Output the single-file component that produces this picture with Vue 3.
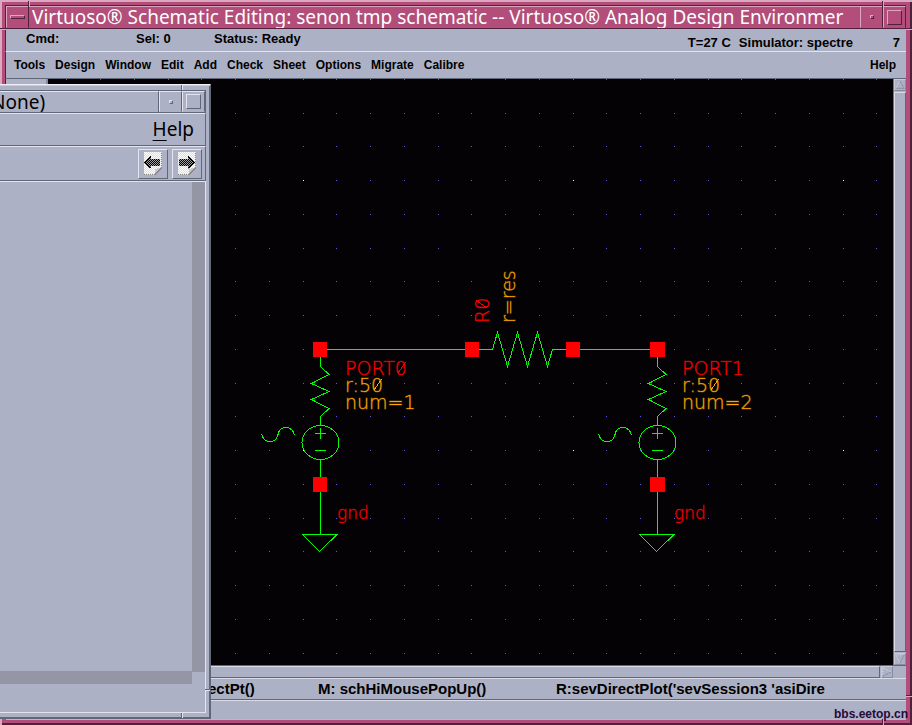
<script setup>
const menus = ['Tools', 'Design', 'Window', 'Edit', 'Add', 'Check', 'Sheet', 'Options', 'Migrate', 'Calibre']

const dots = []
for (let row = 0; row < 18; row++) {
  for (let col = 0; col < 26; col++) {
    dots.push({
      id: row * 26 + col,
      x: Math.floor(66.75 + col * 33.75),
      y: Math.floor(79.49 + row * 33.75),
      major: row % 8 === 3 && col % 8 === 7
    })
  }
}

const ports = [
  { name: 'PORT0', num: 'num=1', x: 320, slash: true },
  { name: 'PORT1', num: 'num=2', x: 657, slash: false }
]
const pins = [
  { x: 313, y: 342, w: 14 },
  { x: 465, y: 342, w: 14 },
  { x: 566, y: 342, w: 14 },
  { x: 650, y: 342, w: 15 },
  { x: 313, y: 477, w: 14 },
  { x: 650, y: 477, w: 15 }
]
</script>

<template>
  <main class="window">
    <header class="titlebar">
      <button class="tb-btn" aria-label="Window menu"><span class="bar"></span></button>
      <h1 class="title">Virtuoso® Schematic Editing: senon tmp schematic -- Virtuoso® Analog Design Environmer</h1>
      <button class="tb-btn" aria-label="Minimize"><span class="dot"></span></button>
      <button class="tb-btn" aria-label="Maximize"><span class="box"></span></button>
    </header>

    <section class="status">
      <span class="cmd">Cmd:</span>
      <span class="sel">Sel: 0</span>
      <span class="state">Status: Ready</span>
      <span class="temp">T=27 C</span>
      <span class="sim">Simulator: spectre</span>
      <span class="count">7</span>
    </section>

    <nav class="menubar">
      <button v-for="m in menus" :key="m">{{ m }}</button>
      <button class="help">Help</button>
    </nav>

    <section class="work">
      <aside class="palette"></aside>
      <svg class="canvas" role="img" aria-label="Schematic">
        <g transform="translate(-48 -79)" shape-rendering="crispEdges">
          <rect v-for="d in dots" :key="d.id" :x="d.x" :y="d.y" width="1" height="1" :fill="d.major ? '#ffffff' : '#5a5ae0'" />
          <path class="wire" d="M327 349.5H465M580 349.5H650" />
          <path class="part" d="M479 349.5H492.5L497.5 332.5L507.5 366.5L517.5 332.5L527.5 366.5L537.5 332.5L547.5 366.5L552.5 349.5H566" />
          <text class="label red" transform="translate(489 323) rotate(-90)">R0</text>
          <path class="red-line" d="M476.5 300.5L487.5 308.5" />
          <text class="label orange" transform="translate(515 323) rotate(-90)">r=res</text>
          <g v-for="p in ports" :key="p.name" :transform="`translate(${p.x} 0)`">
            <path class="part" d="M.5 356V366.5L9 374.5L-8.5 383.5L9 391.5L-8.5 399.5L9 408.5L.5 416.5V425.5M.5 460V477M.5 491V534.5M-17.5 534.5H17L-.5 551.5Z" />
            <ellipse class="part" cx="0.5" cy="442.5" rx="18.5" ry="17" />
            <path class="part" d="M-5 433.5H6M.5 428V439M-5 450.5H6" />
            <path class="part" d="M-58.5 434Q-56.5 441.5-50 441.5Q-43.5 441.5-42 434.5Q-40.5 427.5-34.5 427.5Q-27.5 427.5-25.5 435" />
            <text class="label red" x="25" y="375">{{ p.name }}</text>
            <path v-if="p.slash" class="red-line" d="M77.5 373.5L85.5 362.5" />
            <text class="label orange" x="25" y="392">r:50</text>
            <path class="orange-line" d="M53.5 390.5L61.5 379.5" />
            <text class="label orange" x="25" y="409">{{ p.num }}</text>
            <text class="label small red" x="17" y="519">gnd</text>
          </g>
          <rect v-for="(p, i) in pins" :key="'pin' + i" :x="p.x" :y="p.y" :width="p.w" height="15" fill="#ff0000" />
        </g>
      </svg>
      <div class="vscroll">
        <svg class="arrow" viewBox="0 0 12 12"><path class="hi" d="M1 10L5.5 1" /><path class="lo" d="M6 1L11 10H1" /></svg>
        <div class="vthumb"></div>
        <svg class="arrow" viewBox="0 0 12 12"><path class="hi" d="M11 1H1L6 11" /><path class="lo" d="M6 11L11 1" /></svg>
      </div>
    </section>

    <div class="hscroll">
      <div class="hthumb"></div>
      <svg class="arrow" viewBox="0 0 12 12"><path class="hi" d="M1 1V11M1 1L11 6" /><path class="lo" d="M11 6L1 11" /></svg>
    </div>
    <footer class="mouse">
      <span class="m-left">ectPt()</span>
      <span class="m-mid">M: schHiMousePopUp()</span>
      <span class="m-right">R:sevDirectPlot('sevSession3 'asiDire</span>
    </footer>
    <div class="prompt"></div>

    <i class="notch n1"></i><i class="notch n2"></i><i class="notch n3"></i>
    <i class="notch side s1"></i><i class="notch side s2"></i><i class="notch side s3"></i>

    <section class="dialog">
      <header class="d-title">
        <h2>None)</h2>
        <button aria-label="Minimize dialog"><span class="dot"></span></button>
        <button aria-label="Maximize dialog"><span class="box"></span></button>
      </header>
      <nav class="d-menu"><button><u>H</u>elp</button></nav>
      <div class="d-tools">
        <button aria-label="Back">
          <svg width="20" height="24" viewBox="0 0 20 24" shape-rendering="crispEdges">
            <defs>
              <pattern id="stipple" width="2" height="2" patternUnits="userSpaceOnUse"><rect width="1" height="1" fill="#000" /><rect x="1" y="1" width="1" height="1" fill="#000" /></pattern>
              <pattern id="paper" width="2" height="2" patternUnits="userSpaceOnUse"><rect width="2" height="2" fill="#fff" /><rect width="1" height="1" fill="#dcdce0" /><rect x="1" y="1" width="1" height="1" fill="#dcdce0" /></pattern>
            </defs>
            <path d="M1 0H19V16L12 23H1Z" fill="url(#paper)" />
            <path d="M18.5 1V16M1 22.5H12" fill="none" stroke="#888" stroke-dasharray="1 1" />
            <path d="M12 23V17L18 15Z" fill="#c8c8c8" /><path d="M12 22.5L18.5 16" stroke="#888" />
            <path d="M1 10L8 4V7H17V14H8V17Z" fill="#a0a0a0" />
            <path d="M1 10L8 4V7H17V14H8V17Z" fill="url(#stipple)" />
            <path d="M7.5 4.5L1.5 10.5L7.5 16.5" fill="none" stroke="#000" />
          </svg>
        </button>
        <button aria-label="Forward">
          <svg width="20" height="24" viewBox="0 0 20 24" shape-rendering="crispEdges">
            <path d="M1 0H19V16L12 23H1Z" fill="url(#paper)" />
            <path d="M18.5 1V16M1 22.5H12" fill="none" stroke="#888" stroke-dasharray="1 1" />
            <path d="M12 23V17L18 15Z" fill="#c8c8c8" /><path d="M12 22.5L18.5 16" stroke="#888" />
            <path d="M18 10L11 4V7H2V14H11V17Z" fill="#a0a0a0" />
            <path d="M18 10L11 4V7H2V14H11V17Z" fill="url(#stipple)" />
            <path d="M11.5 4.5L17.5 10.5L11.5 16.5" fill="none" stroke="#000" />
          </svg>
        </button>
      </div>
      <div class="d-body"></div>
      <i class="d-notch t"></i><i class="d-notch b"></i><i class="d-notch r"></i>
    </section>

    <span class="watermark">bbs.eetop.cn</span>
  </main>
</template>

<style>
body { overflow: hidden; background: #adb1c5; }
</style>

<style scoped>
* { box-sizing: border-box; }
button {
  appearance: none; border: 0; padding: 0; margin: 0; background: none;
  font: inherit; color: inherit; border-radius: 0;
}
.window {
  position: relative; display: flex; flex-direction: column; height: 100vh;
  padding: 5px 6px 5px 5px;
  background: #b34d79; color: #000;
  box-shadow: inset 2px 2px #dca8c0, inset -2px -2px #50203c;
  font: bold 12px/16px "Liberation Sans", Arial, sans-serif;
}
.titlebar {
  display: flex; flex: none; height: 24px;
  border: 1px solid #50203c; border-width: 1px 0 1px 1px;
  box-shadow: inset 0 1px #dca8c0;
}
.tb-btn {
  flex: none; width: 23px; display: flex; align-items: center; justify-content: center;
  border: 1px solid; border-color: #dca8c0 #50203c #b34d79 #dca8c0;
}
.title {
  flex: 1; min-width: 0; margin: 0; padding: 0 0 0 3px; overflow: hidden; white-space: nowrap;
  color: #fff; font: 19px/22px "Noto Sans", sans-serif;
}
.bar { width: 15px; height: 4px; border: 1px solid; border-color: #dca8c0 #50203c #50203c #dca8c0; }
.dot { width: 4px; height: 4px; border: 1px solid; border-color: #dca8c0 #50203c #50203c #dca8c0; }
.box { width: 15px; height: 15px; border: 1px solid; border-color: #dca8c0 #50203c #50203c #dca8c0; }

.status, .menubar, .hscroll, .mouse, .prompt { flex: none; background: #adb1c5; border-left: 1px solid #50203c; }
.status { display: flex; height: 22px; padding: 2px 6px 0 20px; white-space: nowrap; font-size: 13px; }
.cmd { width: 110px; }
.sel { width: 78px; }
.temp, .sim, .count { padding-top: 4px; }
.temp { margin-left: auto; margin-right: 8px; }
.count { width: 47px; text-align: right; }
.menubar {
  display: flex; gap: 10px; height: 28px; padding: 0 10px 0 8px;
  border-top: 1px solid #e4e4ee; border-bottom: 1px solid #606878;
}
.help { margin-left: auto; }

.work { display: flex; flex: 1; min-height: 0; background: #adb1c5; }
.palette { flex: none; width: 43px; border-right: 2px solid #888c9c; border-left: 1px solid #50203c; }
.canvas { flex: 1; min-width: 0; height: 100%; background: #040205; }
.wire { fill: none; stroke: #45aee4; }
.part { fill: none; stroke: #00ff00; }
.label { font: 200 19px "DejaVu Sans", sans-serif; stroke-opacity: 0.35; }
.small { font-size: 17px; }
.red { fill: #ff0000; stroke: #ff0000; }
.orange { fill: #ffa500; stroke: #ffa500; }
.red-line { stroke: #ff0000; }
.orange-line { stroke: #ffa500; }
.vscroll {
  flex: none; width: 13px; display: flex; flex-direction: column; gap: 1px;
  border-left: 1px solid #707484;
}
.arrow { flex: none; width: 12px; height: 12px; border: 1px solid; border-color: #c8cad8 #888c9c #888c9c #c8cad8; }
.hi, .lo { fill: none; stroke: #e4e4ee; stroke-dasharray: 1 1; }
.lo { stroke: #606878; }
.vthumb, .hthumb { flex: 1; border: 1px solid; border-color: #dcdce8 #606878 #606878 #dcdce8; }
.hscroll { display: flex; gap: 1px; height: 13px; padding-right: 13px; border-top: 1px solid #606878; }
.mouse {
  display: flex; height: 22px; padding: 2px 0 0 202px; white-space: nowrap; font-size: 15px;
  border-top: 1px solid #dcdce8; border-bottom: 1px solid #606878;
}
.m-left { width: 110px; }
.m-mid { width: 238px; }
.prompt { height: 20px; border-top: 1px solid #dcdce8; border-bottom: 1px solid #dca8c0; }

.notch { position: absolute; width: 2px; height: 6px; border-left: 1px solid #50203c; border-right: 1px solid #dca8c0; }
.n1 { left: 28px; top: 1px; }
.n2 { right: 28px; top: 1px; }
.n3 { right: 28px; bottom: 0; }
.side { width: 6px; height: 2px; border: 0; border-top: 1px solid #50203c; border-bottom: 1px solid #dca8c0; }
.s1 { left: 0; top: 28px; }
.s2 { right: 0; top: 28px; }
.s3 { right: 0; bottom: 28px; }

.dialog {
  position: absolute; left: 0; top: 84px; bottom: 6px; width: 211px;
  display: flex; flex-direction: column; padding: 5px 4px 5px 0; background: #adb1c5;
  border-top: 1px solid #eeeef4; border-right: 1px solid #606878; border-bottom: 1px solid #606878;
  box-shadow: inset 0 1px #c8cad8, inset -1px -1px #606878;
}
.d-title, .d-menu, .d-tools { display: flex; flex: none; border-right: 1px solid #606878; }
.d-title { height: 23px; border-top: 1px solid #606878; border-bottom: 1px solid #606878; }
.d-title h2 {
  flex: 1; margin: 0; font: 19px/20px "Noto Sans", sans-serif; overflow: hidden;
  border-top: 1px solid #e4e4ee; border-right: 1px solid #606878;
  text-indent: -9px;
}
.d-title button {
  width: 23px; display: flex; align-items: center; justify-content: center;
  border: 1px solid; border-color: #e4e4ee #606878 #adb1c5 #e4e4ee;
}
.dialog .dot, .dialog .box { border-color: #e4e4ee #606878 #606878 #e4e4ee; }
.d-menu {
  height: 33px; justify-content: flex-end; align-items: flex-start; padding-right: 11px;
  border-top: 1px solid #e4e4ee; border-bottom: 1px solid #606878;
  font: 19px/30px "Noto Sans", sans-serif;
}
.d-menu u { text-underline-offset: 4px; text-decoration-thickness: 1px; }
.d-tools {
  height: 35px; justify-content: flex-end; gap: 4px; padding: 2px 3px 1px;
  border-top: 1px solid #e4e4ee; border-bottom: 1px solid #606878;
}
.d-tools button {
  width: 30px; display: flex; align-items: center; justify-content: center;
  border: 1px solid; border-color: #e4e4ee #606878 #606878 #e4e4ee;
}
.d-body {
  flex: 1; border-top: 1px solid #e4e4ee; border-right: 1px solid #e4e4ee; border-bottom: 1px solid #e4e4ee;
  background:
    linear-gradient(#9496a6, #9496a6) right 0 top 0 / 13px calc(100% - 40px) no-repeat,
    linear-gradient(#9496a6, #9496a6) right 13px bottom 28px / 100% 13px no-repeat;
}
.d-notch { position: absolute; width: 2px; height: 5px; border-left: 1px solid #606878; border-right: 1px solid #e4e4ee; }
.t { right: 27px; top: 0; }
.b { right: 27px; bottom: 0; }
.r { right: 0; bottom: 27px; width: 5px; height: 2px; border: 0; border-top: 1px solid #606878; border-bottom: 1px solid #e4e4ee; }

.watermark {
  position: absolute; right: 4px; bottom: 3px; color: #2a0838;
  font: bold 12px/16px "Liberation Sans", Arial, sans-serif;
}
</style>
